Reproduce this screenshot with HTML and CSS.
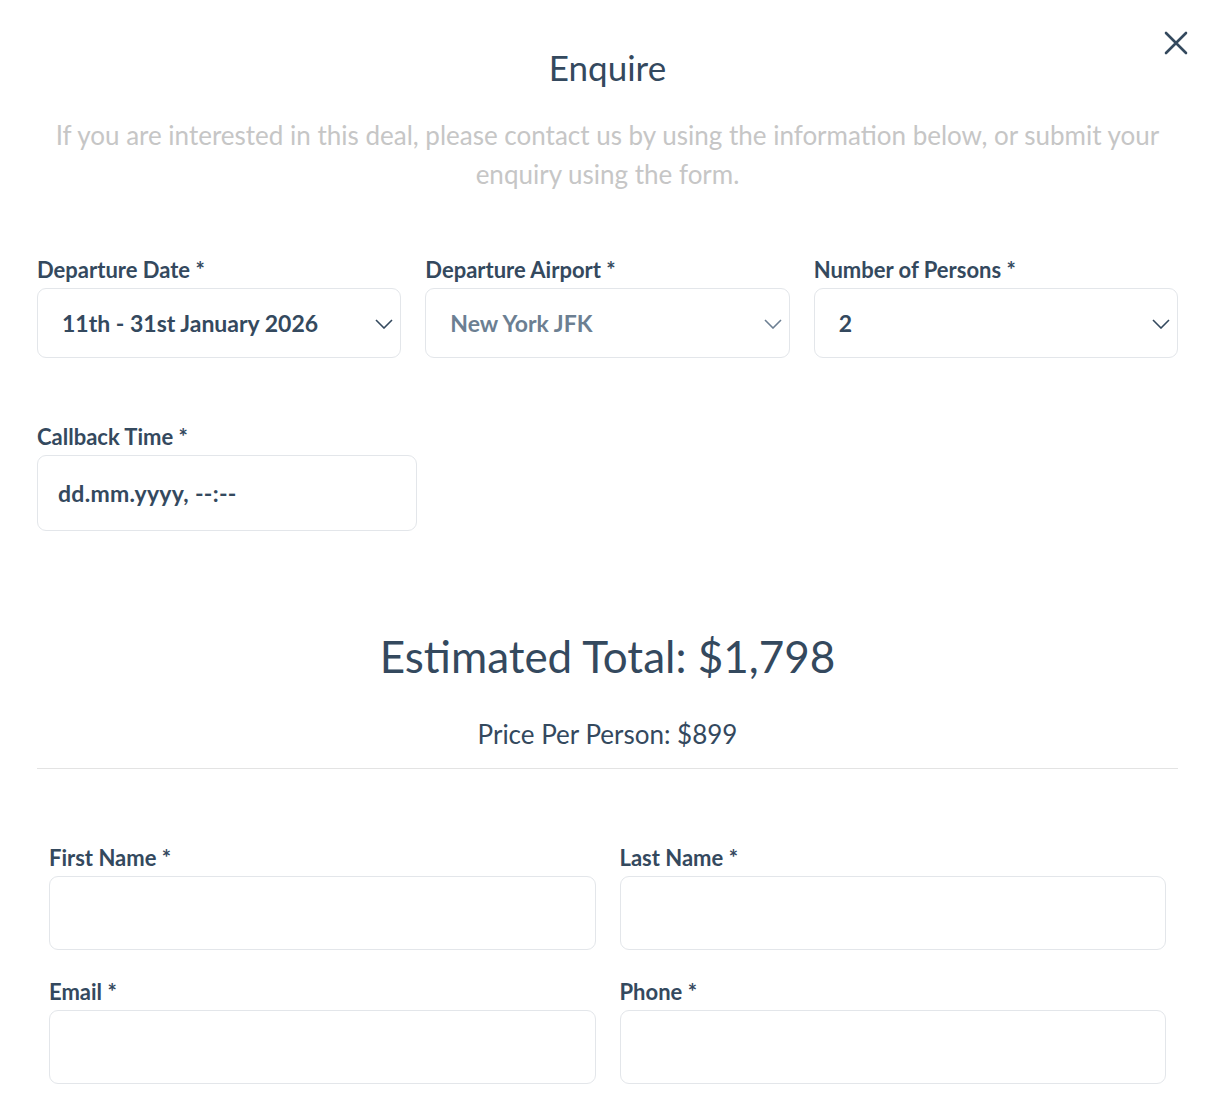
FILE: index.html
```html
<!DOCTYPE html>
<html lang="en">
<head>
  <meta charset="UTF-8">
  <meta name="viewport" content="width=device-width, initial-scale=1.0">
  <title>Enquire</title>
  <link rel="stylesheet" href="styles.css">
</head>
<body>
  <div class="modal">
    <button class="close" aria-label="Close">
      <svg width="24" height="24" viewBox="0 0 24 24"><path d="M2 2 L22 22 M22 2 L2 22" stroke="#34495e" stroke-width="2.6" stroke-linecap="round" fill="none"/></svg>
    </button>

    <h2 class="title">Enquire</h2>
    <p class="intro">If you are interested in this deal, please contact us by using the information below, or submit your enquiry using the form.</p>

    <div class="trip-row">
      <div class="field">
        <label>Departure Date *</label>
        <div class="select">
          <span>11th - 31st January 2026</span>
          <svg class="chev" width="18" height="10" viewBox="0 0 18 10"><path d="M1 1 L9 9 L17 1" stroke="#34495e" stroke-width="1.6" fill="none"/></svg>
        </div>
      </div>
      <div class="field">
        <label>Departure Airport *</label>
        <div class="select muted">
          <span>New York JFK</span>
          <svg class="chev" width="18" height="10" viewBox="0 0 18 10"><path d="M1 1 L9 9 L17 1" stroke="#6c7f92" stroke-width="1.6" fill="none"/></svg>
        </div>
      </div>
      <div class="field">
        <label>Number of Persons *</label>
        <div class="select">
          <span>2</span>
          <svg class="chev" width="18" height="10" viewBox="0 0 18 10"><path d="M1 1 L9 9 L17 1" stroke="#34495e" stroke-width="1.6" fill="none"/></svg>
        </div>
      </div>
    </div>

    <div class="field callback">
      <label>Callback Time *</label>
      <div class="datetime">dd.mm.yyyy, --:--</div>
    </div>

    <div class="totals">
      <div class="total">Estimated Total: $1,798</div>
      <div class="per-person">Price Per Person: $899</div>
    </div>

    <div class="contact">
      <div class="field">
        <label>First Name *</label>
        <input type="text">
      </div>
      <div class="field">
        <label>Last Name *</label>
        <input type="text">
      </div>
      <div class="field">
        <label>Email *</label>
        <input type="email">
      </div>
      <div class="field">
        <label>Phone *</label>
        <input type="tel">
      </div>
    </div>
  </div>
</body>
</html>
```

FILE: styles.css
```css
* {
  box-sizing: border-box;
}
body {
  margin: 0;
  font-family: Lato, 'Noto Sans', sans-serif;
  background: #fff;
  color: #34495e;
}
.modal {
  position: relative;
  padding: 44px 42px 40px 37px;
}
.close {
  position: absolute;
  top: 31px;
  right: 32px;
  background: none;
  border: none;
  padding: 0;
  cursor: pointer;
}
.title {
  margin: 0;
  text-align: center;
  font-size: 35px;
  font-weight: 400;
  line-height: 46px;
}
.intro {
  margin: 26px auto 0;
  max-width: 1141px;
  text-align: center;
  font-size: 26px;
  line-height: 39px;
  color: #c6c6c6;
}
.trip-row {
  display: grid;
  grid-template-columns: repeat(3, 1fr);
  gap: 24px;
  margin-top: 62px;
}
.field label {
  display: block;
  font-size: 22px;
  font-weight: 700;
  line-height: 28px;
  margin-bottom: 4px;
}
.select {
  height: 70px;
  border: 1px solid #e3e6ea;
  border-radius: 9px;
  display: flex;
  align-items: center;
  justify-content: space-between;
  padding: 0 7px 0 24px;
  font-size: 23px;
  font-weight: 700;
}
.select.muted {
  color: #6c7f92;
}
.chev {
  margin-top: 2px;
}
.callback {
  width: 380px;
  margin-top: 65px;
}
.datetime {
  height: 76px;
  border: 1px solid #e3e6ea;
  border-radius: 9px;
  display: flex;
  align-items: center;
  padding-left: 20px;
  font-size: 23px;
  font-weight: 700;
  letter-spacing: 0.3px;
}
.totals {
  margin-top: 97px;
  text-align: center;
  border-bottom: 1px solid #e3e3e3;
  padding-bottom: 17px;
}
.total {
  font-size: 44px;
  line-height: 56px;
}
.per-person {
  margin-top: 33px;
  font-size: 26px;
  line-height: 34px;
}
.contact {
  display: grid;
  grid-template-columns: 1fr 1fr;
  column-gap: 24px;
  row-gap: 28px;
  padding: 75px 12px 0;
}
.contact input {
  display: block;
  width: 100%;
  height: 74px;
  border: 1px solid #e3e6ea;
  border-radius: 9px;
  background: #fff;
}
```
